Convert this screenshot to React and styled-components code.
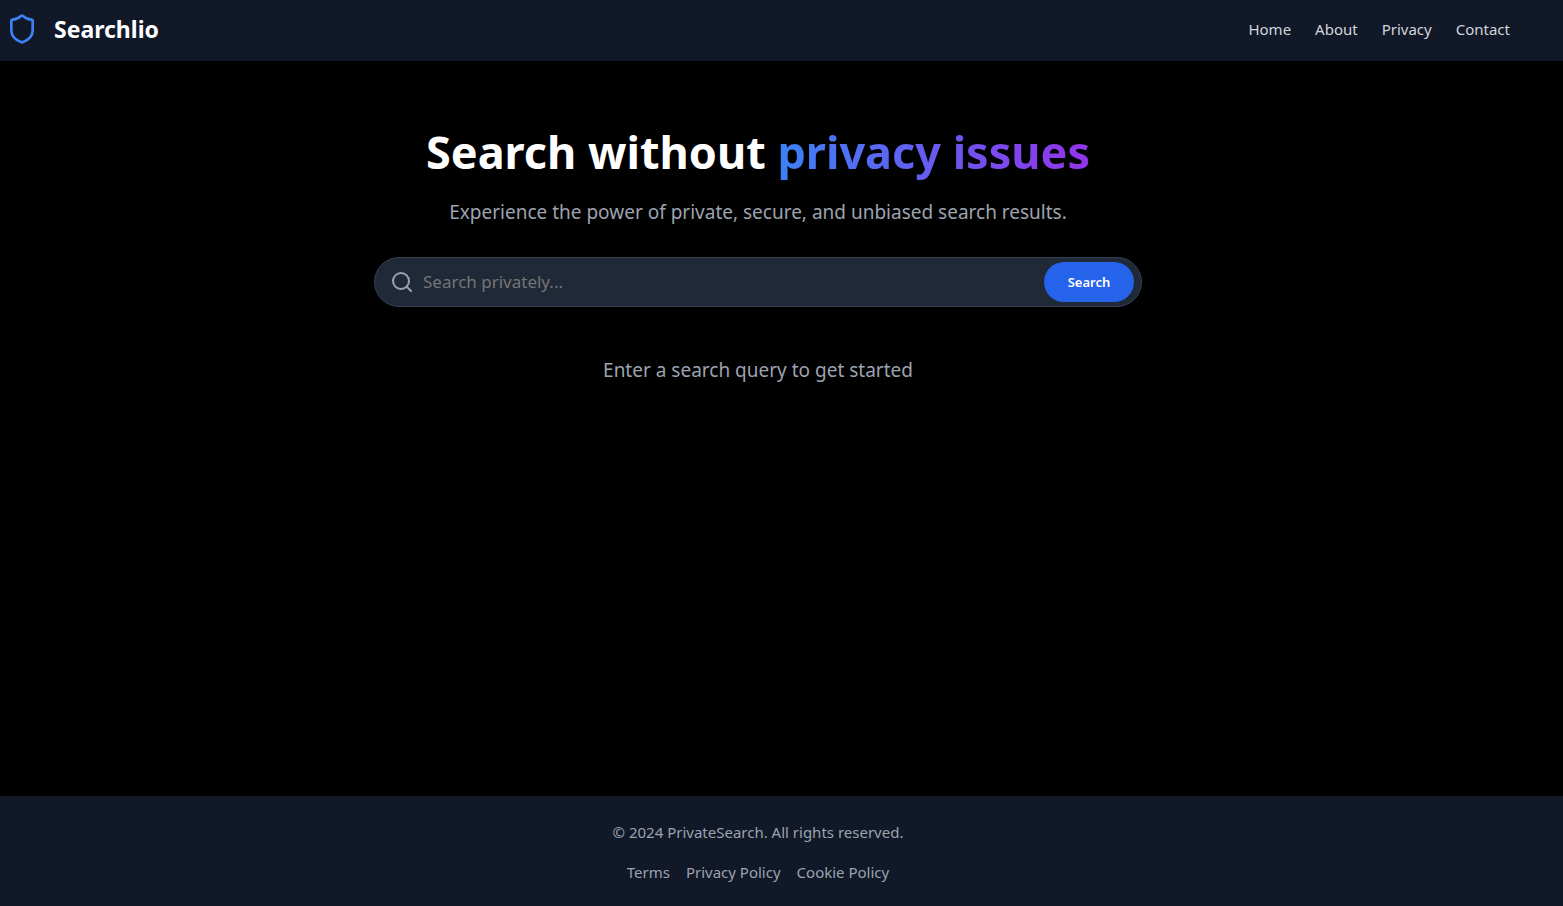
import React from 'react';
import styled, { createGlobalStyle } from 'styled-components';
import { Shield, Search } from 'lucide-react';

const GlobalStyle = createGlobalStyle`
  *, *::before, *::after { box-sizing: border-box; }
  body {
    margin: 0;
    background: #000;
    color: #fff;
    font-family: "Noto Sans", "Open Sans", sans-serif;
    font-size: 15px;
    line-height: 24px;
  }
`;

const Page = styled.div`
  display: flex;
  flex-direction: column;
  min-height: 100vh;
`;

const Header = styled.header`
  display: flex;
  align-items: center;
  justify-content: space-between;
  height: 61px;
  padding: 0 53px 3px 6px;
  background: #111827;
`;

const Brand = styled.a`
  display: flex;
  align-items: center;
  gap: 16px;
  color: #fff;
  font-size: 23px;
  line-height: 32px;
  font-weight: 700;
  text-decoration: none;
`;

const Links = styled.nav`
  display: flex;
  justify-content: ${(p) => (p.$centered ? 'center' : 'flex-end')};
  gap: ${(p) => (p.$centered ? '16px' : '24px')};
`;

const TextLink = styled.a`
  color: ${(p) => (p.$muted ? '#9ca3af' : '#d1d5db')};
  text-decoration: none;
  &:hover { color: #fff; }
`;

const Main = styled.main`
  flex: 1;
  padding: 63px 47px 64px 0;
  text-align: center;
`;

const Title = styled.h1`
  margin: 0 0 16px;
  font-size: 45px;
  line-height: 56px;
  font-weight: 700;
`;

const Gradient = styled.span`
  background: linear-gradient(to right, #3b82f6, #9333ea);
  background-clip: text;
  -webkit-background-clip: text;
  color: transparent;
`;

const Lead = styled.p`
  margin: 0;
  color: #9ca3af;
  font-size: 19px;
  line-height: 32px;
`;

const SearchForm = styled.form`
  display: flex;
  align-items: center;
  gap: 9px;
  max-width: 768px;
  height: 50px;
  margin: 29px auto 47px;
  padding: 0 7px 0 15px;
  border: 1px solid #374151;
  border-radius: 25px;
  background: #1f2937;

  svg { flex: none; }
`;

const SearchInput = styled.input`
  flex: 1;
  min-width: 0;
  padding: 0;
  border: 0;
  outline: 0;
  background: transparent;
  color: #fff;
  font-family: inherit;
  font-size: 17px;
  line-height: 24px;
  &::placeholder { color: #757575; opacity: 1; }
`;

const SearchButton = styled.button`
  width: 90px;
  height: 40px;
  padding: 0;
  border: 0;
  border-radius: 20px;
  background: #2563eb;
  color: #fff;
  font-family: inherit;
  font-size: 13px;
  font-weight: 600;
  cursor: pointer;
`;

const Footer = styled.footer`
  padding: 24px 47px 22px 0;
  background: #111827;
  color: #9ca3af;
  text-align: center;
`;

const Copyright = styled.p`
  margin: 0 0 16px;
`;

export default function App() {
  return (
    <Page>
      <GlobalStyle />
      <Header>
        <Brand href="#"><Shield size={32} color="#3b82f6" aria-hidden="true" />Searchlio</Brand>
        <Links aria-label="Main">
          {['Home', 'About', 'Privacy', 'Contact'].map((label) => (
            <TextLink key={label} href="#">{label}</TextLink>
          ))}
        </Links>
      </Header>
      <Main>
        <Title>Search without <Gradient>privacy issues</Gradient></Title>
        <Lead>Experience the power of private, secure, and unbiased search results.</Lead>
        <SearchForm role="search" onSubmit={(e) => e.preventDefault()}>
          <Search size={24} color="#9ca3af" aria-hidden="true" />
          <SearchInput type="text" aria-label="Search privately" placeholder="Search privately..." />
          <SearchButton type="submit">Search</SearchButton>
        </SearchForm>
        <Lead>Enter a search query to get started</Lead>
      </Main>
      <Footer>
        <Copyright>© 2024 PrivateSearch. All rights reserved.</Copyright>
        <Links $centered aria-label="Legal">
          {['Terms', 'Privacy Policy', 'Cookie Policy'].map((label) => (
            <TextLink key={label} href="#" $muted>{label}</TextLink>
          ))}
        </Links>
      </Footer>
    </Page>
  );
}
